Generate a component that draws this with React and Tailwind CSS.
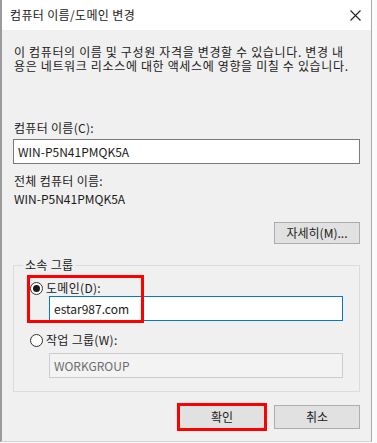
export default function App() {
  const font = { fontFamily: '"Noto Sans CJK KR", "Noto Sans", sans-serif' };
  return (
    <div className="w-[377px] h-[443px] bg-[#fbfbfb] overflow-hidden" style={font}>
      <div className="relative w-[372px] h-[442px] border-l-2 border-r border-b border-l-[#9b9b9b] border-r-[#aaaaaa] border-b-[#d4d4d4] bg-[#f0f0f0] flex flex-col text-[12px] leading-[14px] text-[#1a1a1a]">
        {/* title bar */}
        <div className="h-[30px] bg-white flex items-center justify-between pl-[8px] pr-[10px]">
          <span className="text-[12px] tracking-[0.35px]">컴퓨터 이름/도메인 변경</span>
          <svg width="11" height="11" viewBox="0 0 11 11" className="mt-[1px]">
            <path d="M0.5 0.5 L10.5 10.5 M10.5 0.5 L0.5 10.5" stroke="#222" strokeWidth="1.1" />
          </svg>
        </div>
        {/* description */}
        <div className="ml-[12px] mt-[15px] whitespace-nowrap tracking-[0.65px]">
          이 컴퓨터의 이름 및 구성원 자격을 변경할 수 있습니다. 변경 내
          <br />
          용은 네트워크 리소스에 대한 액세스에 영향을 미칠 수 있습니다.
        </div>
        <div className="ml-[12px] mt-[48px] tracking-[0.3px]">컴퓨터 이름(C):</div>
        <div className="ml-[11px] mt-[4px] w-[347px] h-[25px] bg-white border border-[#7a7a7a] flex items-center pl-[4px]">
          WIN-P5N41PMQK5A
        </div>
        <div className="ml-[12px] mt-[10px] tracking-[0.3px]">전체 컴퓨터 이름:</div>
        <div className="ml-[12px] mt-[4px]">WIN-P5N41PMQK5A</div>
        <div className="self-end mr-[11px] mt-[16px] w-[86px] h-[22px] bg-[#e1e1e1] border border-[#adadad] flex items-center justify-center">
          자세히(M)...
        </div>
        {/* group box */}
        <fieldset className="ml-[11px] mt-[14px] w-[347px] border border-[#dcdcdc] pl-[3px] pb-[13px]">
          <legend className="ml-[6px] px-[2px] tracking-[0.3px]">소속 그룹</legend>
          <div className="mt-[9px] ml-[13px] flex items-center gap-[3px]">
            <span className="w-[13px] h-[13px] rounded-full border border-[#333] bg-white flex items-center justify-center">
              <span className="w-[7px] h-[7px] rounded-full bg-[#1a1a1a]" />
            </span>
            <span className="tracking-[0.3px]">도메인(D):</span>
          </div>
          <div className="ml-[32px] mt-[1px] w-[294px] h-[25px] bg-white border border-[#0078d7] flex items-center pl-[4px]">
            estar987.com
          </div>
          <div className="mt-[12px] ml-[13px] flex items-center gap-[3px]">
            <span className="w-[13px] h-[13px] rounded-full border border-[#333] bg-white" />
            <span className="tracking-[0.3px]">작업 그룹(W):</span>
          </div>
          <div className="ml-[32px] mt-[6px] w-[294px] h-[25px] bg-[#f3f3f3] border border-[#cccccc] flex items-center pl-[4px] text-[#6d6d6d]">
            WORKGROUP
          </div>
        </fieldset>
        {/* red annotation over the domain option */}
        <div className="absolute left-[25px] top-[275px] w-[117px] h-[48px] border-[3px] border-[#ff0000] pointer-events-none" />
        {/* buttons */}
        <div className="self-end mr-[11px] mt-[13px] flex gap-[9px]">
          <div className="w-[86px] h-[24px] bg-[#e1e1e1] border border-[#adadad] flex items-center justify-center outline-[3px] outline-solid outline-[#ff0000] outline-offset-[-1px]">
            확인
          </div>
          <div className="w-[86px] h-[24px] bg-[#e1e1e1] border border-[#adadad] flex items-center justify-center">
            취소
          </div>
        </div>
      </div>
    </div>
  );
}
